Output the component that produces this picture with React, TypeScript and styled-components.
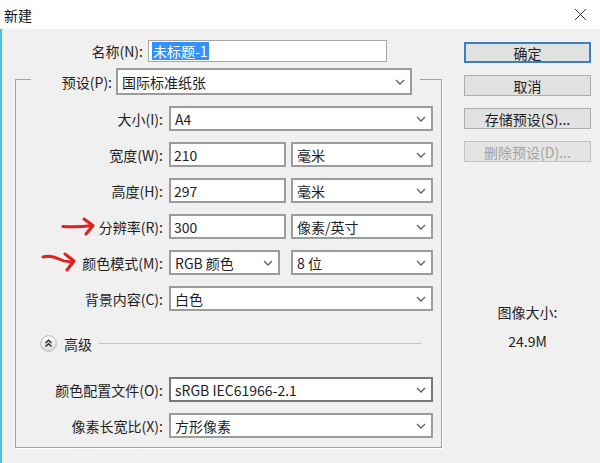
import styled, { createGlobalStyle } from "styled-components";

const GlobalStyle = createGlobalStyle`
  html, body {
    margin: 0;
    padding: 0;
    background: #f0f0f0;
  }
  body {
    font-family: "Noto Sans CJK SC", "Noto Sans", sans-serif;
    font-size: 14px;
    color: #1e1e1e;
  }
`;

const Window = styled.div`
  width: 600px;
  height: 463px;
  background: #f0f0f0;
  overflow: hidden;
  display: flex;
  flex-direction: column;
`;

const TitleBar = styled.div`
  height: 29px;
  flex-shrink: 0;
  background: #ffffff;
  display: flex;
  align-items: center;
  justify-content: space-between;
  padding: 0 13px 0 4px;
`;

const TitleText = styled.span`
  font-size: 14px;
  line-height: 1;
  color: #111;
`;

const Body = styled.div`
  flex: 1;
  display: flex;
  border-left: 2px solid #46c3d1;
`;

const MainColumn = styled.div`
  width: 440px;
  display: flex;
  flex-direction: column;
`;

const SideColumn = styled.div`
  width: 127px;
  margin-left: 22px;
  padding-top: 13px;
  display: flex;
  flex-direction: column;
  gap: 12px;
`;

const Row = styled.div<{ $top: number; $gap: number }>`
  display: flex;
  align-items: center;
  gap: ${(p) => p.$gap}px;
  margin-top: ${(p) => p.$top}px;
`;

const Label = styled.label<{ $width: number }>`
  position: relative;
  width: ${(p) => p.$width}px;
  flex-shrink: 0;
  text-align: right;
  white-space: nowrap;
  font-size: 14px;
  line-height: 20px;
`;

const TextBox = styled.div<{ $width: number; $height?: number; $thin?: boolean }>`
  box-sizing: border-box;
  width: ${(p) => p.$width}px;
  height: ${(p) => p.$height ?? 25}px;
  background: #fff;
  border: ${(p) => (p.$thin ? "1px solid #a8a8a8" : "2px solid #9c9c9c")};
  padding-left: 3px;
  display: flex;
  align-items: center;
  font-size: 14px;
  line-height: 1;
  white-space: nowrap;
`;

const Selected = styled.span`
  background: #3390ff;
  color: #fff;
  padding: 2px 1px;
`;

const SelectBox = styled.div<{ $width: number; $height?: number; $dark?: boolean }>`
  box-sizing: border-box;
  width: ${(p) => p.$width}px;
  height: ${(p) => p.$height ?? 25}px;
  background: #fff;
  border: 2px solid ${(p) => (p.$dark ? "#777" : "#9c9c9c")};
  padding: 0 5px 0 4px;
  display: flex;
  align-items: center;
  justify-content: space-between;
  font-size: 14px;
  line-height: 1;
  white-space: nowrap;
`;

const Group = styled.div`
  box-sizing: border-box;
  margin: 17px 0 0 13px;
  width: 427px;
  height: 369px;
  border: 1px solid #a3a3a3;
  box-shadow: 1px 1px 0 #fff;
  display: flex;
  flex-direction: column;
`;

const PresetRow = styled.div`
  margin: -12px 0 0 15px;
  width: 389px;
  box-sizing: border-box;
  padding-right: 8px;
  background: #f0f0f0;
  display: flex;
  align-items: center;
  gap: 4px;
`;

const AdvancedRow = styled.div`
  display: flex;
  align-items: center;
  gap: 7px;
  height: 17px;
  margin: 24px 20px 0 24px;
  font-size: 14px;
  line-height: 1;
`;

const Rule = styled.div`
  flex: 1;
  height: 1px;
  background: #c4c4c4;
`;

const Button = styled.button<{ $primary?: boolean }>`
  box-sizing: border-box;
  width: 127px;
  height: 21px;
  padding: 0;
  background: #e1e1e1;
  border: ${(p) => (p.$primary ? "2px solid #3b7fc6" : "1px solid #adadad")};
  font-family: inherit;
  font-size: 14px;
  line-height: 1;
  color: #1e1e1e;

  &:disabled {
    color: #a3a3a3;
    border-color: #c2c2c2;
    background: #e4e4e4;
  }
`;

const InfoText = styled.div<{ $top: number }>`
  margin-top: ${(p) => p.$top}px;
  text-align: center;
  font-size: 14px;
  line-height: 20px;
  color: #222;
`;

const ArrowMark = styled.svg<{ $left: number; $top: number }>`
  position: absolute;
  left: ${(p) => p.$left}px;
  top: ${(p) => p.$top}px;
  overflow: visible;
`;

const Pair = styled.div<{ $gap: number }>`
  display: flex;
  gap: ${(p) => p.$gap}px;
`;

const Chevron = () => (
  <svg width="10" height="6" viewBox="0 0 10 6">
    <polyline points="1,1 5,5 9,1" fill="none" stroke="#606060" strokeWidth="1.3" />
  </svg>
);

const CloseIcon = () => (
  <svg width="13" height="13" viewBox="0 0 13 13">
    <path d="M1 1 L12 12 M12 1 L1 12" stroke="#333" strokeWidth="1" />
  </svg>
);

const CollapseIcon = () => (
  <svg width="17" height="17" viewBox="0 0 17 17">
    <defs>
      <linearGradient id="cg" x1="0" y1="0" x2="0" y2="1">
        <stop offset="0" stopColor="#ffffff" />
        <stop offset="1" stopColor="#dcdcdc" />
      </linearGradient>
    </defs>
    <circle cx="8.5" cy="8.5" r="7.8" fill="url(#cg)" stroke="#b5b5b5" />
    <path d="M5.5 8 L8.5 5.2 L11.5 8 M5.5 11.5 L8.5 8.7 L11.5 11.5" fill="none" stroke="#2a2a2a" strokeWidth="1.5" />
  </svg>
);

// hand-drawn red annotation arrows over the labels
const RedArrow = ({ left, top, variant }: { left: number; top: number; variant: 1 | 2 }) => (
  <ArrowMark $left={left} $top={top} width="36" height="20" viewBox="0 0 36 20">
    <path
      d={variant === 1 ? "M1 8.5 Q 15 9.5 31 7.5 M22 1 L31 7.5 L24 16" : "M2 5 Q 10 3 18 7 T 33 9 M24 2 L33 9 L26 18"}
      fill="none"
      stroke="#e5201b"
      strokeWidth="3"
      strokeLinecap="round"
      strokeLinejoin="round"
    />
  </ArrowMark>
);

const Field = ({ label, children, top = 11, arrow }: { label: string; children: React.ReactNode; top?: number; arrow?: 1 | 2 }) => (
  <Row $top={top} $gap={6}>
    <Label $width={147}>
      {arrow === 1 && <RedArrow variant={1} left={46} top={1} />}
      {arrow === 2 && <RedArrow variant={2} left={25} top={-1} />}
      {label}
    </Label>
    {children}
  </Row>
);

const Select = ({ width, value, height, dark }: { width: number; value: string; height?: number; dark?: boolean }) => (
  <SelectBox $width={width} $height={height} $dark={dark}>
    <span>{value}</span>
    <Chevron />
  </SelectBox>
);

export default function App() {
  return (
    <>
      <GlobalStyle />
      <Window>
        <TitleBar>
          <TitleText>新建</TitleText>
          <CloseIcon />
        </TitleBar>
        <Body>
          <MainColumn>
            <Row $top={11} $gap={5}>
              <Label $width={141}>名称(N):</Label>
              <TextBox $width={239} $height={22} $thin>
                <Selected>未标题-1</Selected>
              </TextBox>
            </Row>
            <Group>
              <PresetRow>
                <Label $width={81}>预设(P):</Label>
                <Select width={296} height={27} value="国际标准纸张" />
              </PresetRow>
              <Field label="大小(I):">
                <Select width={264} value="A4" />
              </Field>
              <Field label="宽度(W):">
                <Pair $gap={5}>
                  <TextBox $width={117}>210</TextBox>
                  <Select width={142} value="毫米" />
                </Pair>
              </Field>
              <Field label="高度(H):">
                <Pair $gap={5}>
                  <TextBox $width={117}>297</TextBox>
                  <Select width={142} value="毫米" />
                </Pair>
              </Field>
              <Field label="分辨率(R):" arrow={1}>
                <Pair $gap={5}>
                  <TextBox $width={117}>300</TextBox>
                  <Select width={142} value="像素/英寸" />
                </Pair>
              </Field>
              <Field label="颜色模式(M):" arrow={2}>
                <Pair $gap={11}>
                  <Select width={111} value="RGB 颜色" />
                  <Select width={142} value="8 位" />
                </Pair>
              </Field>
              <Field label="背景内容(C):">
                <Select width={264} value="白色" />
              </Field>
              <AdvancedRow>
                <CollapseIcon />
                <span>高级</span>
                <Rule />
              </AdvancedRow>
              <Field label="颜色配置文件(O):" top={25}>
                <Select width={264} value="sRGB IEC61966-2.1" dark />
              </Field>
              <Field label="像素长宽比(X):">
                <Select width={264} value="方形像素" />
              </Field>
            </Group>
          </MainColumn>
          <SideColumn>
            <Button $primary>确定</Button>
            <Button>取消</Button>
            <Button>存储预设(S)...</Button>
            <Button disabled>删除预设(D)...</Button>
            <div>
              <InfoText $top={128}>图像大小:</InfoText>
              <InfoText $top={9}>24.9M</InfoText>
            </div>
          </SideColumn>
        </Body>
      </Window>
    </>
  );
}
